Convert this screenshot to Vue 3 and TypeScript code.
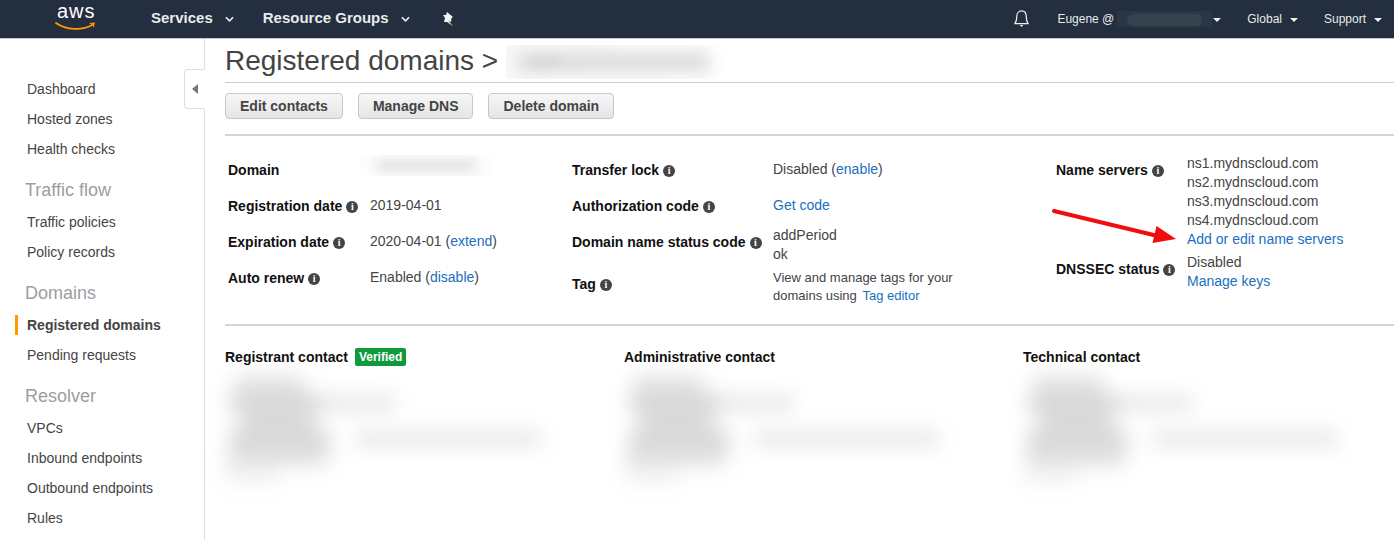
<script setup lang="ts">
interface NavItem { label: string; active?: boolean }
interface NavGroup { title?: string; items: NavItem[] }
interface Seg { x: number; w: number; o: number }
const groups: NavGroup[] = [
  { items: [{ label: 'Dashboard' }, { label: 'Hosted zones' }, { label: 'Health checks' }] },
  { title: 'Traffic flow', items: [{ label: 'Traffic policies' }, { label: 'Policy records' }] },
  { title: 'Domains', items: [{ label: 'Registered domains', active: true }, { label: 'Pending requests' }] },
  { title: 'Resolver', items: [{ label: 'VPCs' }, { label: 'Inbound endpoints' }, { label: 'Outbound endpoints' }, { label: 'Rules' }] },
]
const contacts = ['Registrant contact', 'Administrative contact', 'Technical contact']
const servers = ['ns1', 'ns2', 'ns3', 'ns4'].map((n) => `${n}.mydnscloud.com`)
const smudges: Seg[][] = [
  [{ x: 10, w: 70, o: 0.2 }],
  [{ x: 5, w: 90, o: 0.26 }, { x: 0, w: 75, o: 0.14 }],
  [{ x: 15, w: 75, o: 0.24 }],
  [{ x: 5, w: 100, o: 0.26 }, { x: 25, w: 185, o: 0.14 }],
  [{ x: 3, w: 100, o: 0.2 }],
  [{ x: 0, w: 55, o: 0.08 }],
]
</script>

<template>
  <div class="page">
    <header class="topbar">
      <div class="logo">
        <span class="logo-text">aws</span>
        <svg class="smile" viewBox="0 0 42 10" width="42" height="10">
          <path d="M1 2 C11 9 27 10 37 4" fill="none" stroke="#f90" stroke-width="1.800" stroke-linecap="round" />
          <path d="M34 2 L40 1.500 L38.500 7 L37.500 4 Z" fill="#f90" />
        </svg>
      </div>
      <nav class="main-nav">
        <span class="main-link services">Services<svg class="chev" viewBox="0 0 10 6" width="9" height="6"><path d="M1 1 L5 5 L9 1" fill="none" stroke="#eee" stroke-width="1.800" /></svg></span>
        <span class="main-link">Resource Groups<svg class="chev" viewBox="0 0 10 6" width="9" height="6"><path d="M1 1 L5 5 L9 1" fill="none" stroke="#eee" stroke-width="1.800" /></svg></span>
        <svg class="pin" viewBox="0 0 12 15" width="12" height="15">
          <path d="M4 0 L10 5 L8.500 6 L8 10 L5.500 9 L10 14 L4 10 L1 10 L2 6 L0 3 L3 3 Z" fill="#f2f3f3" />
        </svg>
      </nav>
      <div class="right-nav">
        <svg class="bell" viewBox="0 0 18 20" width="17" height="19">
          <path d="M2 15.500 C4 13 4 11.500 4 8 C4 4.500 6 2 9 2 C12 2 14 4.500 14 8 C14 11.500 14 13 16 15.500 Z" fill="none" stroke="#eee" stroke-width="1.300" stroke-linejoin="round" />
          <path d="M7 17 H11 L9 19 Z" fill="#eee" />
        </svg>
        <span class="user">Eugene @<span class="masked"><i></i></span><span class="caret"></span></span>
        <span class="right-link global">Global<span class="caret"></span></span>
        <span class="right-link">Support<span class="caret"></span></span>
      </div>
    </header>

    <div class="body">
      <aside class="sidebar">
        <section v-for="(g, i) in groups" :key="i" class="group">
          <h3 v-if="g.title" class="group-title">{{ g.title }}</h3>
          <a v-for="item in g.items" :key="item.label" class="side-link" :class="{ active: item.active }">{{ item.label }}</a>
        </section>
        <button class="collapse" type="button" aria-label="Collapse"><span class="tri"></span></button>
      </aside>

      <main class="content">
        <h1 class="title">Registered domains &gt;<span class="title-blur"><i></i><i class="dark"></i></span></h1>
        <div class="actions">
          <button class="btn" type="button">Edit contacts</button>
          <button class="btn" type="button">Manage DNS</button>
          <button class="btn" type="button">Delete domain</button>
        </div>

        <div class="details">
          <div class="col col-a">
            <div class="row"><span class="label">Domain</span><span class="value"><span class="domain-blur"><i></i></span></span></div>
            <div class="row"><span class="label">Registration date <b class="info">i</b></span><span class="value">2019-04-01</span></div>
            <div class="row"><span class="label">Expiration date <b class="info">i</b></span><span class="value">2020-04-01 (<a>extend</a>)</span></div>
            <div class="row"><span class="label">Auto renew <b class="info">i</b></span><span class="value">Enabled (<a>disable</a>)</span></div>
          </div>
          <div class="col col-b">
            <div class="row"><span class="label">Transfer lock <b class="info">i</b></span><span class="value">Disabled (<a>enable</a>)</span></div>
            <div class="row"><span class="label">Authorization code <b class="info">i</b></span><span class="value"><a>Get code</a></span></div>
            <div class="row"><span class="label">Domain name status code <b class="info">i</b></span><span class="value stack">addPeriod<br />ok</span></div>
            <div class="row tag-row"><span class="label">Tag <b class="info">i</b></span><span class="value small">View and manage tags for your<br />domains using <a class="tag-link">Tag editor</a></span></div>
          </div>
          <div class="col col-c">
            <div class="row ns"><span class="label">Name servers <b class="info">i</b></span>
              <span class="value lines"><span v-for="s in servers" :key="s">{{ s }}</span><a>Add or edit name servers</a></span>
            </div>
            <div class="row dnssec"><span class="label">DNSSEC status <b class="info">i</b></span>
              <span class="value lines"><span>Disabled</span><a>Manage keys</a></span>
            </div>
          </div>
          <svg class="arrow" viewBox="0 0 130 42" width="130" height="42">
            <path d="M2 3 L110 29" stroke="#f00d0d" stroke-width="4" stroke-linecap="round" />
            <path d="M104.500 18 L124 31 L100.500 35 Z" fill="#f00d0d" />
          </svg>
        </div>

        <div class="contacts">
          <div v-for="(c, i) in contacts" :key="c" class="contact">
            <h4 class="contact-title">{{ c }}<span v-if="i === 0" class="badge">Verified</span></h4>
            <div class="smudges">
              <div v-for="(row, j) in smudges" :key="j" class="smudge-row">
                <i v-for="(s, k) in row" :key="k" :style="{ marginLeft: s.x + 'px', width: s.w + 'px', opacity: s.o }"></i>
              </div>
            </div>
          </div>
        </div>
      </main>
    </div>
  </div>
</template>

<style>
html, body { margin: 0; background: #fff; }
</style>

<style scoped>
.page { width: 1394px; height: 540px; overflow: hidden; font-family: "Liberation Sans", Arial, sans-serif; font-size: 14px; color: #444; }

.topbar { height: 38px; background: #232f3e; border-bottom: 1px solid #c4c8cc; display: flex; align-items: center; color: #f2f3f3; }
.logo { width: 151px; flex: none; height: 38px; padding-left: 57px; box-sizing: border-box; position: relative; }
.logo-text { display: block; font-size: 20px; line-height: 23px; letter-spacing: 1px; color: #fff; }
.smile { position: absolute; left: 55px; top: 21px; }
.main-nav { display: flex; align-items: center; font-weight: 700; font-size: 15px; color: #e8eaec; padding-bottom: 3px; }
.main-link { display: flex; align-items: center; margin-right: 33px; }
.services { margin-right: 29px; }
.chev { margin-left: 12px; margin-top: 3px; }
.pin { margin-top: 3px; margin-left: 0; }
.right-nav { margin-left: auto; display: flex; align-items: center; font-size: 12px; padding-right: 12px; color: #e8eaec; }
.bell { margin-right: 27px; margin-top: -1px; }
.user, .right-link { display: flex; align-items: center; }
.masked { display: block; width: 95px; height: 16px; background: #2a3744; margin-left: 3px; overflow: hidden; }
.masked i { display: block; margin: 3px 10px; height: 12px; border-radius: 8px; background: #36424e; }
.caret { width: 0; height: 0; border-left: 4px solid transparent; border-right: 4px solid transparent; border-top: 4px solid #eee; margin-left: 1px; margin-top: 1px; }
.user { margin-right: 26px; }
.right-link .caret { margin-left: 8px; }
.global { margin-right: 26px; }

.body { display: flex; height: 501px; }
.sidebar { position: relative; width: 204px; flex: none; border-right: 1px solid #dcdfe1; padding-top: 35px; }
.group-title { margin: 15px 0 6px; font-size: 18px; font-weight: 400; color: #9a9ea3; padding-left: 25px; line-height: 22px; }
.side-link { display: block; height: 30px; line-height: 30px; padding-left: 27px; color: #444; }
.side-link.active { font-weight: 700; position: relative; }
.side-link.active::before { content: ""; position: absolute; left: 15px; top: 5px; width: 3px; height: 20px; background: #f90; }
.collapse { position: absolute; right: -1px; top: 30px; width: 21px; height: 40px; padding: 0; border: 1px solid #dcdfe1; border-right: 1px solid #fff; border-radius: 4px 0 0 4px; background: #fff; display: flex; align-items: center; justify-content: center; }
.tri { width: 0; height: 0; border-top: 5px solid transparent; border-bottom: 5px solid transparent; border-right: 6px solid #777; }

.content { flex: 1; min-width: 0; padding-left: 20px; }
.title { margin: 0; height: 44px; box-sizing: border-box; border-bottom: 1px solid #ccc; font-size: 28px; font-weight: 400; line-height: 44px; color: #444; display: flex; }
.title-blur { display: block; width: 219px; height: 34px; margin: 6px 0 0 8px; overflow: hidden; position: relative; background: linear-gradient(90deg, #f8f8f8, #fcfcfc 85%, #fff); }
.title-blur i { display: block; position: absolute; left: 12px; right: 16px; top: 8px; bottom: 8px; background: #dadada; filter: blur(8px); }
.title-blur .dark { left: 26px; right: 165px; top: 14px; bottom: 14px; background: #d6d6d6; filter: blur(4px); }
.actions { display: flex; gap: 15px; padding-top: 10px; height: 53px; box-sizing: border-box; border-bottom: 2px solid #d5d5d5; }
.btn { height: 26px; padding: 0 14px; font: 700 14px "Liberation Sans", Arial, sans-serif; color: #444; border: 1px solid #c6c6c6; border-radius: 4px; background: linear-gradient(#f7f7f7, #e5e5e5); }

.details { position: relative; height: 190px; box-sizing: border-box; border-bottom: 2px solid #d5d5d5; display: flex; padding-top: 18px; padding-left: 3px; }
.col { flex: none; }
.col-a { width: 344px; }
.col-b { width: 484px; }
.row { display: flex; height: 36px; align-items: flex-start; line-height: 19px; padding-top: 6px; box-sizing: border-box; }
.label { font-weight: 700; color: #111; flex: none; display: flex; align-items: center; gap: 4px; white-space: nowrap; margin-top: 1px; }
.value { color: #444; white-space: nowrap; }
.value a, .lines a { color: #1a6fc0; }
.col-a .label { width: 142px; }
.col-b .label { width: 201px; }
.col-c .label { width: 131px; }
.info { width: 12px; height: 12px; border-radius: 50%; background: #444; color: #fff; font: 700 10px/12px "Liberation Serif", serif; text-align: center; display: inline-block; flex: none; }
.stack { margin-top: -6px; }
.tag-row .label { margin-top: 7px; }
.small { font-size: 13px; line-height: 18px; margin-top: 1px; }
.tag-link { margin-left: 2px; }
.domain-blur { display: block; width: 132px; height: 21px; margin: -5px 0 0 -10px; position: relative; overflow: hidden; background: #fdfdfd; }
.domain-blur i { position: absolute; inset: 5px 16px; background: #e0e0e0; filter: blur(6px); display: block; }
.lines { display: flex; flex-direction: column; line-height: 19px; }
.ns { height: 94px; padding-top: 0; }
.ns .label { margin-top: 7px; }
.dnssec { padding-top: 5px; }
.dnssec .label { margin-top: 7px; }
.arrow { position: absolute; left: 827px; top: 72px; }

.contacts { display: flex; padding-top: 21px; }
.contact { width: 399px; flex: none; }
.contact-title { margin: 0; height: 20px; line-height: 20px; font-size: 14px; font-weight: 700; color: #111; display: flex; align-items: center; }
.badge { margin-left: 7px; height: 18px; line-height: 18px; padding: 0 4px; font-size: 12px; font-weight: 700; color: #fff; background: #0f9a3c; border-radius: 2px; }
.smudges { display: flex; flex-direction: column; gap: 2px; padding-top: 10px; filter: blur(10px); }
.smudge-row { display: flex; height: 16px; }
.smudge-row i { display: block; height: 16px; background: #555; flex: none; }
</style>
